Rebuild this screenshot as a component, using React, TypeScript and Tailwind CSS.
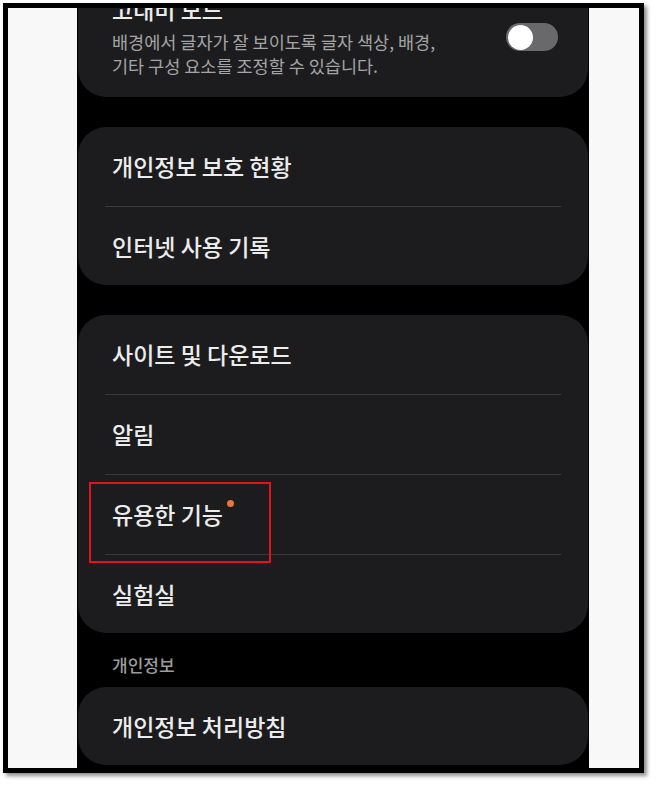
import React from "react";

type Row = { label: string; dot?: boolean };

const font = { fontFamily: '"Noto Sans CJK KR", "Noto Sans", sans-serif' };

function Card({ rows }: { rows: Row[] }) {
  return (
    <div className="rounded-[28px] bg-[#1c1c1e] px-[27px]">
      {rows.map((row, i) => (
        <div key={row.label}>
          {i > 0 && <div className="h-px bg-[#3a3a3c]" />}
          <div
            className={`flex items-center pl-[7px] text-[23px] font-medium text-[#ececec] ${
              i === rows.length - 1 ? "h-[78px]" : "h-[79px]"
            }`}
          >
            <span>{row.label}</span>
            {row.dot && (
              <span className="relative -top-[11px] ml-[4px] h-[7px] w-[7px] rounded-full bg-[#e8753c]" />
            )}
          </div>
        </div>
      ))}
    </div>
  );
}

export default function App() {
  return (
    <div className="h-[786px] w-[656px] bg-white pl-[3px] pt-[3px]" style={font}>
      <div className="relative flex h-[770px] w-[641px] border-[5px] border-black bg-[#f8f8f8] shadow-[3px_3px_4px_rgba(0,0,0,0.45)]">
        <div className="w-[69px]" />

        <div className="flex h-full w-[512px] flex-col overflow-hidden bg-black px-px">
          {/* high contrast card, scrolled partly out of view */}
          <div className="-mt-[40px] flex rounded-[28px] bg-[#1c1c1e] pb-[19px] pl-[34px] pr-[30px] pt-[26px]">
            <div className="flex-1">
              <div className="mb-[6px] h-[30px] text-[23px] font-medium leading-[30px] text-[#ececec]">
                고대비 모드
              </div>
              <p className="whitespace-nowrap text-[17.5px] leading-[24px] text-[#a4a4a6]">
                배경에서 글자가 잘 보이도록 글자 색상, 배경,
                <br />
                기타 구성 요소를 조정할 수 있습니다.
              </p>
            </div>
            <div className="mt-[29px] flex h-[28px] w-[52px] shrink-0 items-center rounded-full bg-[#69696c] px-[2px]">
              <div className="h-[25px] w-[25px] rounded-full bg-white" />
            </div>
          </div>

          <div className="mt-[30px]">
            <Card rows={[{ label: "개인정보 보호 현황" }, { label: "인터넷 사용 기록" }]} />
          </div>

          <div className="mt-[30px]">
            <Card
              rows={[
                { label: "사이트 및 다운로드" },
                { label: "알림" },
                { label: "유용한 기능", dot: true },
                { label: "실험실" },
              ]}
            />
          </div>

          <div className="h-[54px] pl-[34px] pt-[21px] text-[17px] font-medium leading-[22px] text-[#9c9c9e]">
            개인정보
          </div>

          <Card rows={[{ label: "개인정보 처리방침" }]} />
        </div>

        <div className="w-[50px]" />

        {/* highlight box */}
        <div className="absolute left-[81px] top-[474px] h-[81px] w-[182px] border-2 border-[#e0141a]" />
      </div>
    </div>
  );
}
